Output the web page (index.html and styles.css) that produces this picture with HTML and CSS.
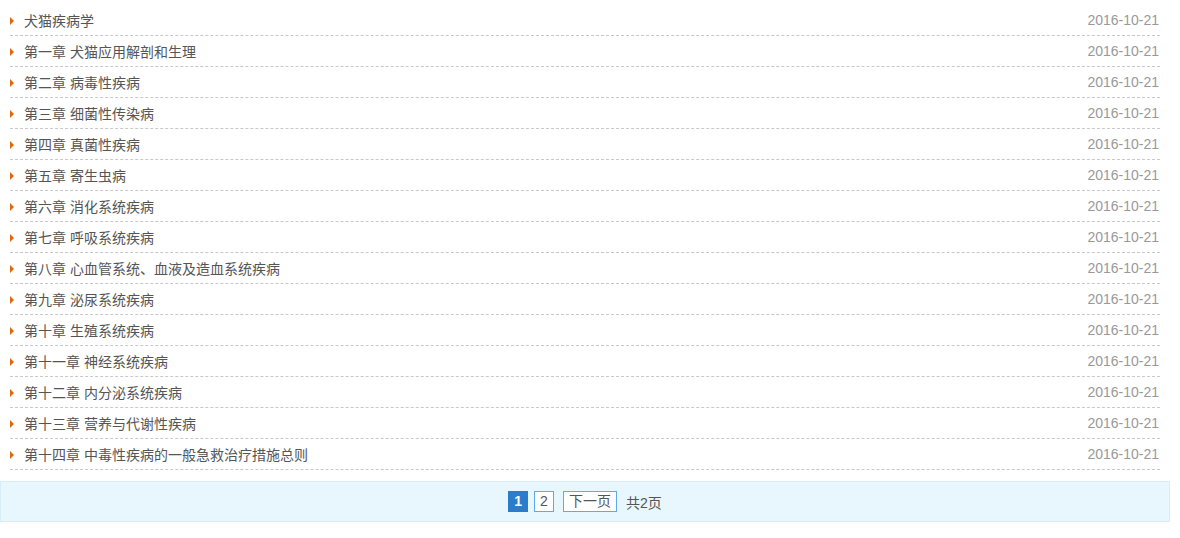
FILE: index.html
```html
<!DOCTYPE html>
<html lang="zh-CN">
<head>
    <meta charset="UTF-8">
    <title>犬猫疾病学</title>
    <link rel="stylesheet" href="styles.css">
</head>
<body>
    <div class="wrap">
        <ul class="list">
            <li><a href="#">犬猫疾病学</a><span class="date">2016-10-21</span></li>
            <li><a href="#">第一章 犬猫应用解剖和生理</a><span class="date">2016-10-21</span></li>
            <li><a href="#">第二章 病毒性疾病</a><span class="date">2016-10-21</span></li>
            <li><a href="#">第三章 细菌性传染病</a><span class="date">2016-10-21</span></li>
            <li><a href="#">第四章 真菌性疾病</a><span class="date">2016-10-21</span></li>
            <li><a href="#">第五章 寄生虫病</a><span class="date">2016-10-21</span></li>
            <li><a href="#">第六章 消化系统疾病</a><span class="date">2016-10-21</span></li>
            <li><a href="#">第七章 呼吸系统疾病</a><span class="date">2016-10-21</span></li>
            <li><a href="#">第八章 心血管系统、血液及造血系统疾病</a><span class="date">2016-10-21</span></li>
            <li><a href="#">第九章 泌尿系统疾病</a><span class="date">2016-10-21</span></li>
            <li><a href="#">第十章 生殖系统疾病</a><span class="date">2016-10-21</span></li>
            <li><a href="#">第十一章 神经系统疾病</a><span class="date">2016-10-21</span></li>
            <li><a href="#">第十二章 内分泌系统疾病</a><span class="date">2016-10-21</span></li>
            <li><a href="#">第十三章 营养与代谢性疾病</a><span class="date">2016-10-21</span></li>
            <li><a href="#">第十四章 中毒性疾病的一般急救治疗措施总则</a><span class="date">2016-10-21</span></li>
        </ul>

        <div class="pages">
            <span class="current">1</span>
            <a href="#" class="num">2</a>
            <a href="#" class="next">下一页</a>
            <span class="total">共2页</span>
        </div>
    </div>
</body>
</html>
```

FILE: styles.css
```css
/* Styles généraux */
body {
    margin: 0;
    background-color: #fff;
    font-family: "Liberation Sans", "Noto Sans CJK SC", sans-serif;
    font-size: 14px;
    color: #555;
}

a {
    color: #555;
    text-decoration: none;
}

.wrap {
    width: 1170px;
}

/* Liste des chapitres */
.list {
    list-style: none;
    margin: 0 10px;
    padding: 5px 0 0 0;
}
.list li {
    display: flex;
    align-items: center;
    justify-content: space-between;
    height: 30px;
    border-bottom: 1px dashed #c8c8c8;
    padding-left: 14px;
    position: relative;
}
.list li::before {
    content: "";
    position: absolute;
    left: 0;
    top: 12px;
    border-left: 4px solid #e2670c;
    border-top: 4px solid transparent;
    border-bottom: 4px solid transparent;
}
.list .date {
    color: #999;
    font-family: "Liberation Sans", sans-serif;
    font-size: 14px;
    padding-right: 1px;
}

/* Pagination */
.pages {
    margin-top: 11px;
    height: 39px;
    background-color: #e8f7fe;
    border: 1px solid #d6eefa;
    display: flex;
    align-items: center;
    justify-content: center;
    gap: 6px;
    font-size: 14px;
}
.pages .current,
.pages .num,
.pages .next {
    height: 19px;
    line-height: 19px;
    padding: 0 5px;
    border: 1px solid #5cabf0;
    background-color: #fff;
}
.pages .current {
    background-color: #2b7ccb;
    border-color: #2b7ccb;
    color: #fff;
    font-weight: bold;
}
.pages .next {
    margin-left: 3px;
}
.pages .total {
    margin-left: 3px;
}
```
